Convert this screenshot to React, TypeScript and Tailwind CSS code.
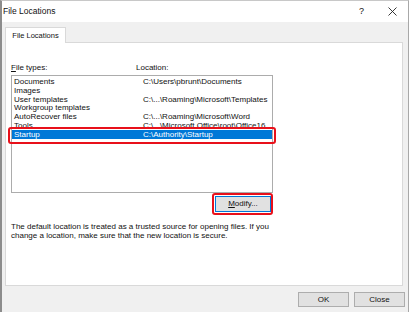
import React from "react";

const rows = [
  { name: "Documents", loc: "C:\\Users\\pbrunt\\Documents" },
  { name: "Images", loc: "" },
  { name: "User templates", loc: "C:\\...\\Roaming\\Microsoft\\Templates" },
  { name: "Workgroup templates", loc: "" },
  { name: "AutoRecover files", loc: "C:\\...\\Roaming\\Microsoft\\Word" },
  { name: "Tools", loc: "C:\\...\\Microsoft Office\\root\\Office16" },
  { name: "Startup", loc: "C:\\Authority\\Startup", selected: true },
];

export default function App() {
  return (
    <div className="flex h-[312px] w-[411px] bg-white font-['Liberation_Sans',Arial,sans-serif] text-[8px] text-[#111]">
      <div className="flex h-full w-[409px] flex-col border-l-2 border-r border-t border-l-[#8c8c8c] border-r-[#a8a8a8] border-t-[#c8c8c8] bg-[#f0f0f0]">
        {/* title bar */}
        <div className="flex h-[21px] items-center bg-white pl-[1px] pr-[11px]">
          <span className="text-[8.5px]">File Locations</span>
          <span className="ml-auto mr-[24px] text-[9px]">?</span>
          <svg width="9" height="9" viewBox="0 0 9 9" className="mb-[1px]">
            <path d="M0.5 0.5 L8.5 8.5 M8.5 0.5 L0.5 8.5" stroke="#222" strokeWidth="0.9" />
          </svg>
        </div>

        {/* tab strip */}
        <div className="flex pl-[3px] pt-[5px]">
          <div className="relative z-10 -mb-px flex h-[16px] w-[61px] items-center justify-center border border-b-0 border-[#d9d9d9] bg-white text-[7.5px]">
            File Locations
          </div>
        </div>

        {/* panel */}
        <div className="ml-[3px] mr-[5px] flex h-[244px] flex-col border border-[#d9d9d9] bg-white pl-[5px] pt-[20px]">
          <div className="flex h-[10px] items-center">
            <span className="w-[125px]">
              <span className="underline">F</span>ile types:
            </span>
            <span>Location:</span>
          </div>

          <div className="relative mt-[2px] h-[118px] w-[262px] border border-[#acacac] pt-[1.5px]">
            {rows.map((r) => (
              <div
                key={r.name}
                className={
                  r.selected
                    ? "flex h-[8.8px] items-center overflow-hidden whitespace-nowrap bg-[#0078d7] pl-[2px] text-white"
                    : "flex h-[8.8px] items-center overflow-hidden whitespace-nowrap pl-[2px]"
                }
              >
                <span className="w-[129px] shrink-0">{r.name}</span>
                <span>{r.loc}</span>
              </div>
            ))}
            <div className="absolute left-[-4px] top-[51px] h-[17px] w-[268px] rounded-[3px] border-[2.5px] border-[#e8101a]" />
          </div>

          <div className="flex w-[262px] justify-end pt-[3px]">
            <div className="relative">
              <div className="mr-[2px] flex h-[16px] w-[56px] items-center justify-center border border-[#0078d7] bg-[#e1e1e1]">
                <span>
                  <span className="underline">M</span>odify...
                </span>
              </div>
              <div className="absolute left-[-3px] top-[-3px] h-[22px] w-[61px] rounded-[3px] border-[2.5px] border-[#e8101a]" />
            </div>
          </div>

          <p className="mt-[10px] leading-[9px]">
            The default location is treated as a trusted source for opening files. If you
            <br />
            change a location, make sure that the new location is secure.
          </p>
        </div>

        {/* buttons */}
        <div className="flex justify-end gap-[5px] pr-[3px] pt-[6px]">
          <div className="flex h-[15px] w-[51px] items-center justify-center border border-[#adadad] bg-[#e1e1e1]">
            OK
          </div>
          <div className="flex h-[15px] w-[51px] items-center justify-center border border-[#adadad] bg-[#e1e1e1]">
            Close
          </div>
        </div>
      </div>
    </div>
  );
}
